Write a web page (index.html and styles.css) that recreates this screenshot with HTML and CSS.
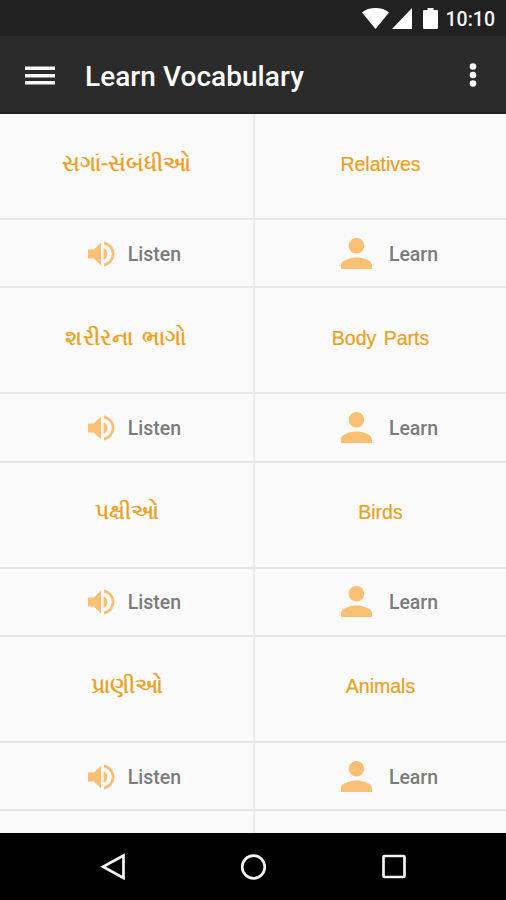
FILE: index.html
```html
<!DOCTYPE html>
<html lang="gu">
<head>
<meta charset="utf-8">
<title>Learn Vocabulary</title>
<link rel="stylesheet" href="styles.css">
</head>
<body>
<svg class="defs" aria-hidden="true">
  <symbol id="volume" viewBox="0 0 27 26"><path d="M0 8.500h6L13 1.500v23L6 17.500H0zM15.500 7q4 2 4 6t-4 6zM16 .5a12.700 12.700 0 0 1 0 25v-3a9.700 9.700 0 0 0 0-19z"/></symbol>
  <symbol id="person" viewBox="4 4 16 16"><path d="M12 12c2.210 0 4-1.790 4-4s-1.790-4-4-4-4 1.790-4 4 1.790 4 4 4zm0 2c-2.670 0-8 1.340-8 4v2h16v-2c0-2.660-5.330-4-8-4z"/></symbol>
</svg>
<div class="phone">
  <div class="status">
    <svg class="wifi" viewBox="0 0 27 21"><path d="M0 4.500Q2 2.500 6 1q7.500-2 15 0 4 1.500 6 3.500L13.500 21z"/></svg>
    <svg class="signal" viewBox="0 0 20 21"><path d="M20 0v21H0z"/></svg>
    <svg class="battery" viewBox="0 0 15 21"><path d="M4.500 0h6v2H14q1 0 1 1v17q0 1-1 1H1q-1 0-1-1V3q0-1 1-1h3.500z"/></svg>
    <span class="clock">10:10</span>
  </div>
  <header class="bar">
    <svg class="menu" viewBox="0 0 30 20"><path d="M0 .5h30V4H0zM0 8h30v3.500H0zM0 15h30v3.500H0z"/></svg>
    <h1>Learn Vocabulary</h1>
    <svg class="more" viewBox="0 0 8 24"><circle cx="4" cy="3.500" r="3.300"/><circle cx="4" cy="12" r="3.300"/><circle cx="4" cy="20.500" r="3.300"/></svg>
  </header>
  <main class="list">
    <div class="word gu">સગાં-સંબંધીઓ</div><div class="word en">Relatives</div>
    <div class="act listen"><svg><use href="#volume"/></svg>Listen</div><div class="act learn"><svg><use href="#person"/></svg>Learn</div>
    <div class="word gu wide">શરીરના ભાગો</div><div class="word en">Body Parts</div>
    <div class="act listen"><svg><use href="#volume"/></svg>Listen</div><div class="act learn"><svg><use href="#person"/></svg>Learn</div>
    <div class="word gu">પક્ષીઓ</div><div class="word en">Birds</div>
    <div class="act listen"><svg><use href="#volume"/></svg>Listen</div><div class="act learn"><svg><use href="#person"/></svg>Learn</div>
    <div class="word gu">પ્રાણીઓ</div><div class="word en">Animals</div>
    <div class="act listen"><svg><use href="#volume"/></svg>Listen</div><div class="act learn"><svg><use href="#person"/></svg>Learn</div>
    <div class="word"></div><div class="word"></div>
  </main>
  <nav class="nav">
    <svg viewBox="0 0 26 28"><path d="M23.500 2.500v22.500L3 13.700z"/></svg>
    <svg viewBox="0 0 26 28"><circle cx="13.500" cy="14" r="11.300"/></svg>
    <svg viewBox="0 0 26 28"><rect x="3.500" y="3" width="21" height="21" rx="1"/></svg>
  </nav>
</div>
</body>
</html>
```
FILE: styles.css
```css
body { margin: 0; font-family: Roboto, sans-serif; }
.defs { display: none; }
.phone { display: flex; flex-direction: column; width: 506px; height: 900px; overflow: hidden; background: #fafafa; }
.status { display: flex; align-items: center; justify-content: flex-end; flex: none; height: 36px; box-sizing: border-box; padding-right: 11px; background: #212121; color: #f4f4f4; fill: #fff; }
.wifi { width: 27px; height: 21px; }
.signal { width: 20px; height: 21px; margin-left: 3px; }
.battery { width: 15px; height: 21px; margin-left: 11px; }
.clock { margin-left: 8px; font-size: 19.500px; font-weight: 500; line-height: 36px; padding-top: 3px; }
.bar { display: flex; align-items: center; flex: none; height: 78px; box-sizing: border-box; padding: 0 29px 0 25px; background: #2b2b2b; border-bottom: 2px solid #222; color: #fafafa; fill: #fafafa; }
.menu { width: 30px; height: 20px; margin-top: 3px; }
h1 { flex: 1; margin: 5px 0 0 30px; font-size: 28px; font-weight: 500; line-height: 36px; letter-spacing: .05px; }
.more { width: 8px; height: 24px; margin-top: 2px; }
.list { display: grid; grid-template-columns: 255px 251px; grid-auto-rows: 106px 68.300px; flex: 1; min-height: 0; overflow: hidden; }
.word, .act { display: flex; align-items: center; justify-content: center; box-sizing: border-box; border-bottom: 2px solid #e6e6e6; }
.word:nth-child(odd), .act:nth-child(odd) { border-right: 2px solid #ececec; }
.word { color: #eaa019; font-size: 22px; padding-bottom: 6px; }
.gu { -webkit-text-stroke: .4px #eaa019; }
.wide { letter-spacing: .6px; word-spacing: 2px; }
.en { font-family: "Liberation Sans", sans-serif; font-size: 19.500px; -webkit-text-stroke: .2px #eaa019; padding-bottom: 4px; word-spacing: 2px; }
.act { color: #7b7b7b; font-size: 19.500px; font-weight: 500; padding-top: 2px; }
.act svg { fill: #f9bf72; }
.listen svg { width: 27px; height: 26px; margin: -1px 13px 0 0; }
.learn svg { width: 31px; height: 31px; margin: -2px 17px 0 0; }
.learn { padding-left: 18px; }
.listen { padding-left: 16px; }
.nav { display: flex; justify-content: center; align-items: center; gap: 114px; flex: none; height: 67px; background: #000; }
.nav svg { width: 26px; height: 28px; fill: none; stroke: #f4f4f4; stroke-width: 2.700; }
```
